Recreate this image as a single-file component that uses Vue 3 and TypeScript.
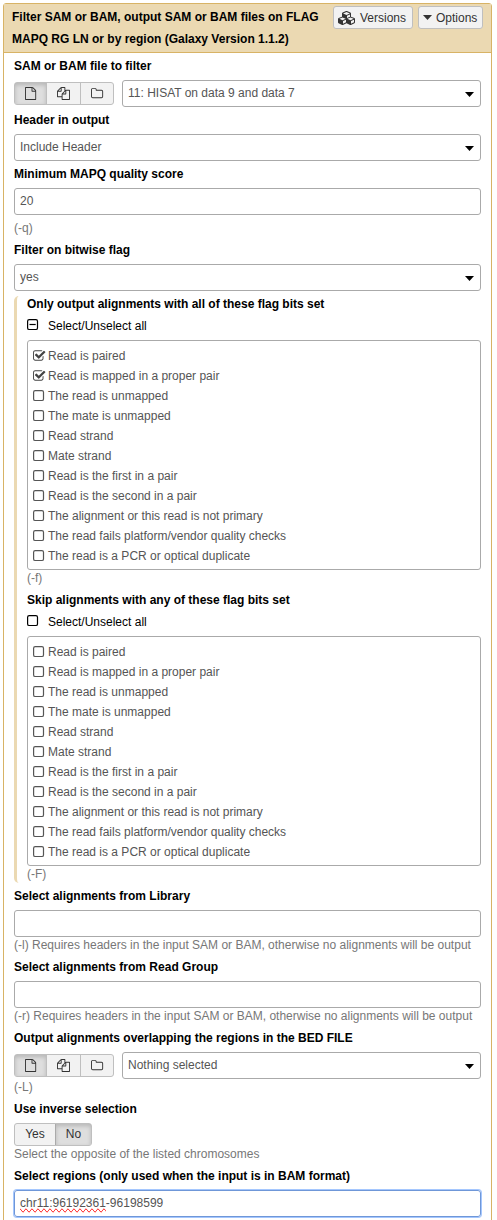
<script setup lang="ts">
import { ref } from 'vue'

interface FlagGroup {
  title: string
  help: string
  partial: boolean
  checked: number[]
}

const flags: string[] = [
  'Read is paired',
  'Read is mapped in a proper pair',
  'The read is unmapped',
  'The mate is unmapped',
  'Read strand',
  'Mate strand',
  'Read is the first in a pair',
  'Read is the second in a pair',
  'The alignment or this read is not primary',
  'The read fails platform/vendor quality checks',
  'The read is a PCR or optical duplicate',
]

const groups = ref<FlagGroup[]>([
  { title: 'Only output alignments with all of these flag bits set', help: '(-f)', partial: true, checked: [0, 1] },
  { title: 'Skip alignments with any of these flag bits set', help: '(-F)', partial: false, checked: [] },
])

function toggle(group: FlagGroup, index: number): void {
  group.checked = group.checked.includes(index)
    ? group.checked.filter((i) => i !== index)
    : [...group.checked, index]
}
</script>

<template>
  <div class="page">
    <svg class="defs" width="0" height="0">
      <symbol id="sources" viewBox="0 0 100 24">
        <g fill="#333">
          <path transform="translate(10.1 5) scale(.00725)" d="M1596 380q28 28 48 76t20 88v1152q0 40-28 68t-68 28h-1344q-40 0-68-28t-28-68v-1600q0-40 28-68t68-28h896q40 0 88 20t76 48zm-444-244v376h376q-10-29-22-41l-313-313q-12-12-41-22zm384 1528v-1024h-416q-40 0-68-28t-28-68v-416h-768v1536h1280z" />
          <path transform="translate(43 5) scale(.00725)" d="M1696 384q40 0 68 28t28 68v1216q0 40-28 68t-68 28h-960q-40 0-68-28t-28-68v-288h-544q-40 0-68-28t-28-68v-672q0-40 20-88t48-76l408-408q28-28 76-48t88-20h416q40 0 68 28t28 68v328q68-40 128-40h416zm-544 213l-299 299h299v-299zm-640-384l-299 299h299v-299zm196 647l316-316v-416h-384v416q0 40-28 68t-68 28h-416v640h512v-256q0-40 20-88t48-76zm956 804v-1152h-384v416q0 40-28 68t-68 28h-416v640h896z" />
          <path transform="translate(76.600 5) scale(.00725)" d="M1600 1312v-704q0-40-28-68t-68-28h-704q-40 0-68-28t-28-68v-64q0-40-28-68t-68-28h-320q-40 0-68 28t-28 68v960q0 40 28 68t68 28h1216q40 0 68-28t28-68zm128-704v704q0 92-66 158t-158 66h-1216q-92 0-158-66t-66-158v-960q0-92 66-158t158-66h320q92 0 158 66t66 158v32h672q92 0 158 66t66 158z" />
        </g>
      </symbol>
    </svg>
    <section class="panel">
      <header class="head">
        <h1 class="title">Filter SAM or BAM, output SAM or BAM files on FLAG<br />MAPQ RG LN or by region (Galaxy Version 1.1.2)</h1>
        <button class="btn versions">
          <svg width="18" height="14" viewBox="0 0 2304 1792" fill="#333">
            <path d="M640 1632l384-192v-314l-384 164v342zm-64-454l404-173-404-173-404 173zm1088 454l384-192v-314l-384 164v342zm-64-454l404-173-404-173-404 173zm-448-293l384-165v-266l-384 164v267zm-64-379l441-189-441-189-441 189zm1088 518v416q0 36-19 67t-52 47l-448 224q-25 14-57 14t-57-14l-448-224q-4-2-7-4-2 2-7 4l-448 224q-25 14-57 14t-57-14l-448-224q-33-16-52-47t-19-67v-416q0-38 21.500-70t56.500-48l434-186v-400q0-38 21.500-70t56.500-48l448-192q23-10 50-10t50 10l448 192q35 16 56.500 48t21.500 70v400l434 186q36 16 57 48t21 70z" />
          </svg>
          <span>Versions</span>
        </button>
        <button class="btn options"><i class="caret dark"></i><span>Options</span></button>
      </header>
      <div class="body">
        <label class="label">SAM or BAM file to filter</label>
        <div class="data">
          <div class="sources"><i class="pressed"></i><i></i><i></i><svg class="glyphs" width="100" height="24"><use href="#sources" /></svg></div>
          <div class="field select"><span>11: HISAT on data 9 and data 7</span><i class="caret"></i></div>
        </div>
        <label class="label">Header in output</label>
        <div class="field select"><span>Include Header</span><i class="caret"></i></div>
        <label class="label">Minimum MAPQ quality score</label>
        <div class="field">20</div>
        <p class="help spaced">(-q)</p>
        <label class="label">Filter on bitwise flag</label>
        <div class="field select"><span>yes</span><i class="caret"></i></div>

        <div class="nested">
          <div v-for="group in groups" :key="group.help" class="group">
            <label class="sublabel">{{ group.title }}</label>
            <div class="all">
              <svg width="12" height="12" viewBox="0 0 12 12" fill="none" stroke="#000" stroke-width="1.200">
                <rect x=".6" y=".6" width="9.900" height="9.900" rx="1.600" />
                <path v-if="group.partial" d="M2.500 5.500h6.200" />
              </svg>
              <span>Select/Unselect all</span>
            </div>
            <ul class="flags">
              <li v-for="(flag, i) in flags" :key="flag" @click="toggle(group, i)">
                <svg width="14" height="12" viewBox="0 0 14 12">
                  <path v-if="group.checked.includes(i)" fill="#444" transform="translate(-.4 -.7) scale(.00740)" d="M1472 930v318q0 119-84.500 203.500t-203.500 84.500h-832q-119 0-203.500-84.500t-84.500-203.500v-832q0-119 84.500-203.500t203.500-84.500h832q63 0 117 25 15 7 18 23 3 17-9 29l-49 49q-10 10-23 10-3 0-9-2-23-6-45-6h-832q-66 0-113 47t-47 113v832q0 66 47 113t113 47h832q66 0 113-47t47-113v-254q0-13 9-22l64-64q10-10 23-10 6 0 12 3 20 8 20 29zm231-489l-814 814q-24 24-57 24t-57-24l-430-430q-24-24-24-57t24-57l110-110q24-24 57-24t57 24l263 263 647-647q24-24 57-24t57 24l110 110q24 24 24 57t-24 57z" />
                  <rect v-else x=".6" y=".6" width="9.900" height="9.900" rx="1.600" fill="none" stroke="#555" stroke-width="1.200" />
                </svg>
                <span>{{ flag }}</span>
              </li>
            </ul>
            <p class="help">{{ group.help }}</p>
          </div>
        </div>

        <label class="label">Select alignments from Library</label>
        <div class="field"></div>
        <p class="help">(-l) Requires headers in the input SAM or BAM, otherwise no alignments will be output</p>
        <label class="label">Select alignments from Read Group</label>
        <div class="field"></div>
        <p class="help">(-r) Requires headers in the input SAM or BAM, otherwise no alignments will be output</p>
        <label class="label">Output alignments overlapping the regions in the BED FILE</label>
        <div class="data">
          <div class="sources"><i class="pressed"></i><i></i><i></i><svg class="glyphs" width="100" height="24"><use href="#sources" /></svg></div>
          <div class="field select"><span>Nothing selected</span><i class="caret"></i></div>
        </div>
        <p class="help">(-L)</p>
        <label class="label">Use inverse selection</label>
        <div class="toggle"><span>Yes</span><span class="pressed">No</span></div>
        <p class="help">Select the opposite of the listed chromosomes</p>
        <label class="label">Select regions (only used when the input is in BAM format)</label>
        <div class="field focused"><span class="misspelt">chr11:96192361</span>-96198599</div>
      </div>
    </section>
  </div>
</template>

<style>
body {
  background: #fff;
}
</style>

<style scoped>
* {
  box-sizing: border-box;
}
.page {
  height: 1220px;
  overflow: hidden;
  padding: 3px 5px 0 3px;
  font: 12px/16px "Liberation Sans", Arial, sans-serif;
  color: #555;
}
.defs {
  display: block;
}
.panel {
  height: 1240px;
  border: 1px solid #d8b365;
  border-radius: 3px 3px 0 0;
}
.head {
  display: flex;
  align-items: flex-start;
  height: 49px;
  padding: 2px 8px 0;
  background: #ebd9b2;
  border-bottom: 1px solid #d8b365;
}
.title {
  flex: 1;
  margin: 0;
  font-size: 12px;
  line-height: 22px;
  color: #000;
  white-space: nowrap;
}
.btn {
  display: flex;
  align-items: center;
  height: 23px;
  padding: 0 5px;
  border: 1px solid #bfbfbf;
  border-radius: 3px;
  background: #f2f2f2;
  color: #333;
  font: inherit;
}
.versions {
  width: 80px;
  padding: 0 4px;
  gap: 4px;
}
.options {
  width: 65px;
  margin-left: 5px;
  padding: 0 4px;
  gap: 4px;
}
.body {
  padding: 0 10px;
}
.label,
.sublabel {
  display: block;
  font-weight: bold;
  color: #000;
}
.label {
  height: 27px;
  line-height: 26px;
}
.sublabel {
  height: 22px;
}
.field {
  height: 27px;
  padding: 0 5px;
  border: 1px solid #aaa;
  border-radius: 3px;
  line-height: 25px;
}
.select {
  display: flex;
  align-items: center;
  justify-content: space-between;
  padding-right: 6px;
}
.caret {
  width: 9px;
  height: 5px;
  margin-top: 2px;
  background: #000;
  clip-path: polygon(0 0, 100% 0, 50% 100%);
}
.caret.dark {
  margin-top: 0;
  background: #333;
}
.data {
  display: grid;
  grid-template-columns: 100px 1fr;
  gap: 8px;
}
.sources {
  position: relative;
  display: grid;
  grid-template-columns: 31px 34px 33px;
  height: 23px;
  margin-top: 2px;
  border: 1px solid #bfbfbf;
  border-radius: 3px;
  background: #f2f2f2;
}
.sources i + i {
  border-left: 1px solid #bfbfbf;
}
.glyphs {
  position: absolute;
  left: -1px;
  top: -1px;
}
.pressed {
  background: #dedede;
  box-shadow: inset 0 2px 4px rgba(0, 0, 0, 0.18);
}
.help {
  height: 17px;
  margin: 0;
  color: #777;
  white-space: nowrap;
}
.help.spaced {
  height: 22px;
  padding-top: 5px;
}
.nested {
  height: 587px;
  margin-top: 5px;
  padding-left: 10px;
  border-left: 3px solid #ebd9b2;
  border-radius: 5px 0 0 5px;
}
.group {
  height: 296px;
}
.all {
  display: flex;
  gap: 9px;
  height: 22px;
  color: #000;
}
.all svg {
  margin-top: 1px;
}
.flags {
  height: 230px;
  margin: 0;
  padding: 5px;
  list-style: none;
  border: 1px solid #aaa;
  border-radius: 3px;
}
.flags li {
  display: flex;
  align-items: center;
  gap: 1px;
  height: 20px;
}
.toggle {
  display: flex;
  width: 78px;
  height: 23px;
  border: 1px solid #bfbfbf;
  border-radius: 3px;
  background: #f2f2f2;
  color: #333;
  line-height: 21px;
  text-align: center;
}
.toggle span {
  width: 40px;
}
.toggle .pressed {
  width: 36px;
  border-left: 1px solid #aaa;
}
.focused {
  border-color: #6f97d8;
  box-shadow: 0 0 0 1px #a5c7fe;
}
.misspelt {
  text-decoration: underline wavy #f00 1px;
  text-decoration-line: spelling-error;
}
</style>
